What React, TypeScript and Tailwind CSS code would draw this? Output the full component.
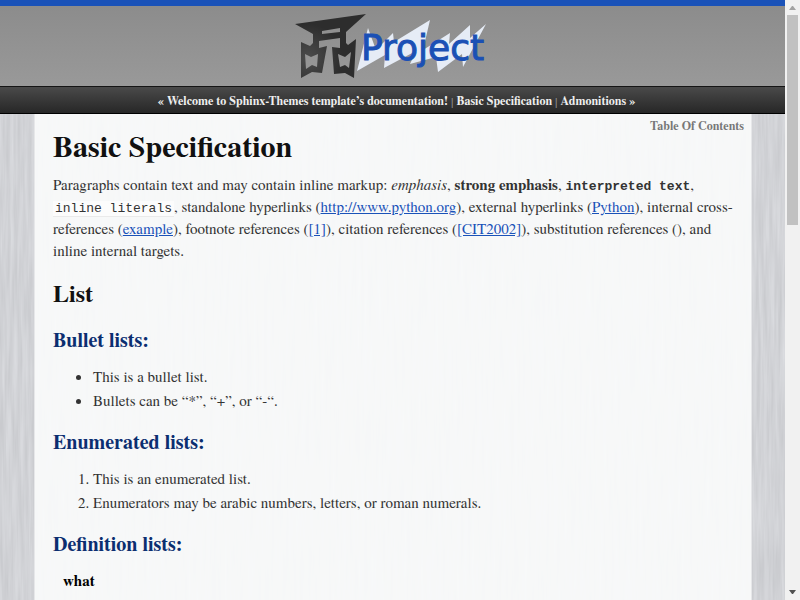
import type { ReactNode } from "react";

function DocLink({ href, children }: { href: string; children: ReactNode }) {
  return (
    <a href={href} className="text-[#1a52b8] underline">
      {children}
    </a>
  );
}

function Logo() {
  return (
    <svg
      className="block"
      width="210"
      height="80"
      viewBox="288 6 210 80"
      role="img"
      aria-label="Project"
    >
      <defs>
        <radialGradient id="ink" gradientUnits="userSpaceOnUse" cx="308" cy="58" r="34">
          <stop offset="0" stopColor="#4c4c4c" />
          <stop offset="1" stopColor="#2d2d2d" />
        </radialGradient>
      </defs>
      <path
        fill="url(#ink)"
        fillRule="evenodd"
        d="M295 24L366 14L346 32V43L348 45L356 39L354 78L345 73L334 74L332 47L340 48V38L319 41V48L327 46L322 73L312 72L301 78V42L310 46L313 43V34ZM322 31L340 28V32L322 34ZM305 54L311 57L318 54L317 67L312 65L306 69ZM338 54L345 57L351 52L349 68L345 65L340 67Z"
      />
      <path
        fill="#e6ecf6"
        d="M357 71L368 28L376 50L393 33L394 42L430 20L423 50L450 33L449 44L470 25V38L486 24L463 67L462 54L438 72L436 57L410 64L416 51L384 68L385 55Z"
      />
      <text
        x="361"
        y="60"
        fontFamily="DejaVu Sans, sans-serif"
        fontSize="36"
        fill="#1b50b5"
        stroke="#1b50b5"
        strokeWidth="1"
      >
        Project
      </text>
    </svg>
  );
}

function ScrollRail() {
  return (
    <div aria-hidden="true" className="flex w-[15px] shrink-0 flex-col items-center bg-[#f1f1f1]">
      <svg width="15" height="15" viewBox="0 0 15 15">
        <path fill="#a3a3a3" d="M4 10h7L8 6H7z" />
      </svg>
      <div className="h-[210px] w-[11px] bg-[#c1c1c1]" />
      <svg className="mt-auto" width="15" height="15" viewBox="0 0 15 15">
        <path fill="#505050" d="M4 5h7L8 9H7z" />
      </svg>
    </div>
  );
}

function WoodGrain() {
  return (
    <svg className="absolute inset-0 size-full" aria-hidden="true">
      <filter id="grain" x="0" y="0" width="100%" height="100%" colorInterpolationFilters="sRGB">
        <feTurbulence type="fractalNoise" baseFrequency="0.28 0.014" numOctaves="3" seed="4" />
        <feColorMatrix values="0.1 0 0 0 0.77  0.1 0 0 0 0.775  0.1 0 0 0 0.79  0 0 0 0 1" />
      </filter>
      <rect width="100%" height="100%" filter="url(#grain)" />
    </svg>
  );
}

function SectionTitle({ children }: { children: ReactNode }) {
  return <h3 className="mt-[18px] mb-3 text-xl leading-6 font-bold text-[#0b2e70]">{children}</h3>;
}

export default function App() {
  return (
    <div className="flex h-screen overflow-hidden font-['Nimbus_Roman','Nimbus_Roman_No9_L','TeX_Gyre_Termes','Liberation_Serif',serif] text-[15px] text-[#333]">
      <div className="flex min-w-0 flex-1 flex-col">
        <header className="flex h-[86px] shrink-0 justify-center border-t-[6px] border-[#1a52b8] bg-linear-to-b from-[#8c8c8c] to-[#999]">
          <Logo />
        </header>
        <nav className="flex h-7 shrink-0 items-center justify-center border-y border-t-[#151515] border-b-black bg-linear-to-b from-[#4a4a4a] to-[#272727] pt-px pl-2 text-xs font-bold whitespace-pre text-[#eee]">
          <span>« </span>
          <a href="#welcome">Welcome to Sphinx-Themes template’s documentation!</a>
          <span className="font-normal text-[#999]"> | </span>
          <a href="#basic">Basic Specification</a>
          <span className="font-normal text-[#999]"> | </span>
          <a href="#admonitions">Admonitions</a>
          <span> »</span>
        </nav>
        <div className="relative min-h-0 flex-1 overflow-hidden pr-[33px] pl-[34px]">
          <WoodGrain />
          <main className="relative h-full border-x border-[#e6e7e9] bg-[#fbfcfc]/90 px-[18px]">
            <a href="#toc" className="absolute top-1 right-[7px] text-xs leading-4 font-bold text-[#777]">
              Table Of Contents
            </a>
            <h1 className="pt-[13px] text-[30px] leading-9 font-bold text-[#111]">Basic Specification</h1>
            <p className="mt-[10px] leading-[22px]">
              Paragraphs contain text and may contain inline markup: <em>emphasis</em>,{" "}
              <strong>strong emphasis</strong>,{" "}
              <cite className="font-['Nimbus_Mono_PS','Nimbus_Mono_L','Liberation_Mono',monospace] text-[13px] leading-none font-bold not-italic">
                interpreted text
              </cite>
              ,{" "}
              <code className="border-b border-[#eaeaea] bg-[#fcfcfc] px-0.5 font-['Nimbus_Mono_PS','Nimbus_Mono_L','Liberation_Mono',monospace] text-[13px] leading-none">
                inline literals
              </code>
              , standalone hyperlinks (<DocLink href="#python-org">http://www.python.org</DocLink>),
              external hyperlinks (<DocLink href="#python">Python</DocLink>), internal
              cross-references (<DocLink href="#example">example</DocLink>), footnote references (
              <DocLink href="#id1">[1]</DocLink>), citation references (
              <DocLink href="#cit2002">[CIT2002]</DocLink>), substitution references (), and inline
              internal targets.
            </p>
            <h2 className="mt-[18px] mb-[21px] text-2xl leading-7 font-bold text-[#111]">List</h2>
            <SectionTitle>Bullet lists:</SectionTitle>
            <ul className="list-disc pl-10 leading-6">
              <li>This is a bullet list.</li>
              <li>Bullets can be “*”, “+”, or “-“.</li>
            </ul>
            <SectionTitle>Enumerated lists:</SectionTitle>
            <ol className="list-decimal pl-10 leading-6">
              <li>This is an enumerated list.</li>
              <li>Enumerators may be arabic numbers, letters, or roman numerals.</li>
            </ol>
            <SectionTitle>Definition lists:</SectionTitle>
            <dl className="pl-[10px] leading-6">
              <dt className="font-bold text-black">what</dt>
            </dl>
          </main>
        </div>
      </div>
      <ScrollRail />
    </div>
  );
}
